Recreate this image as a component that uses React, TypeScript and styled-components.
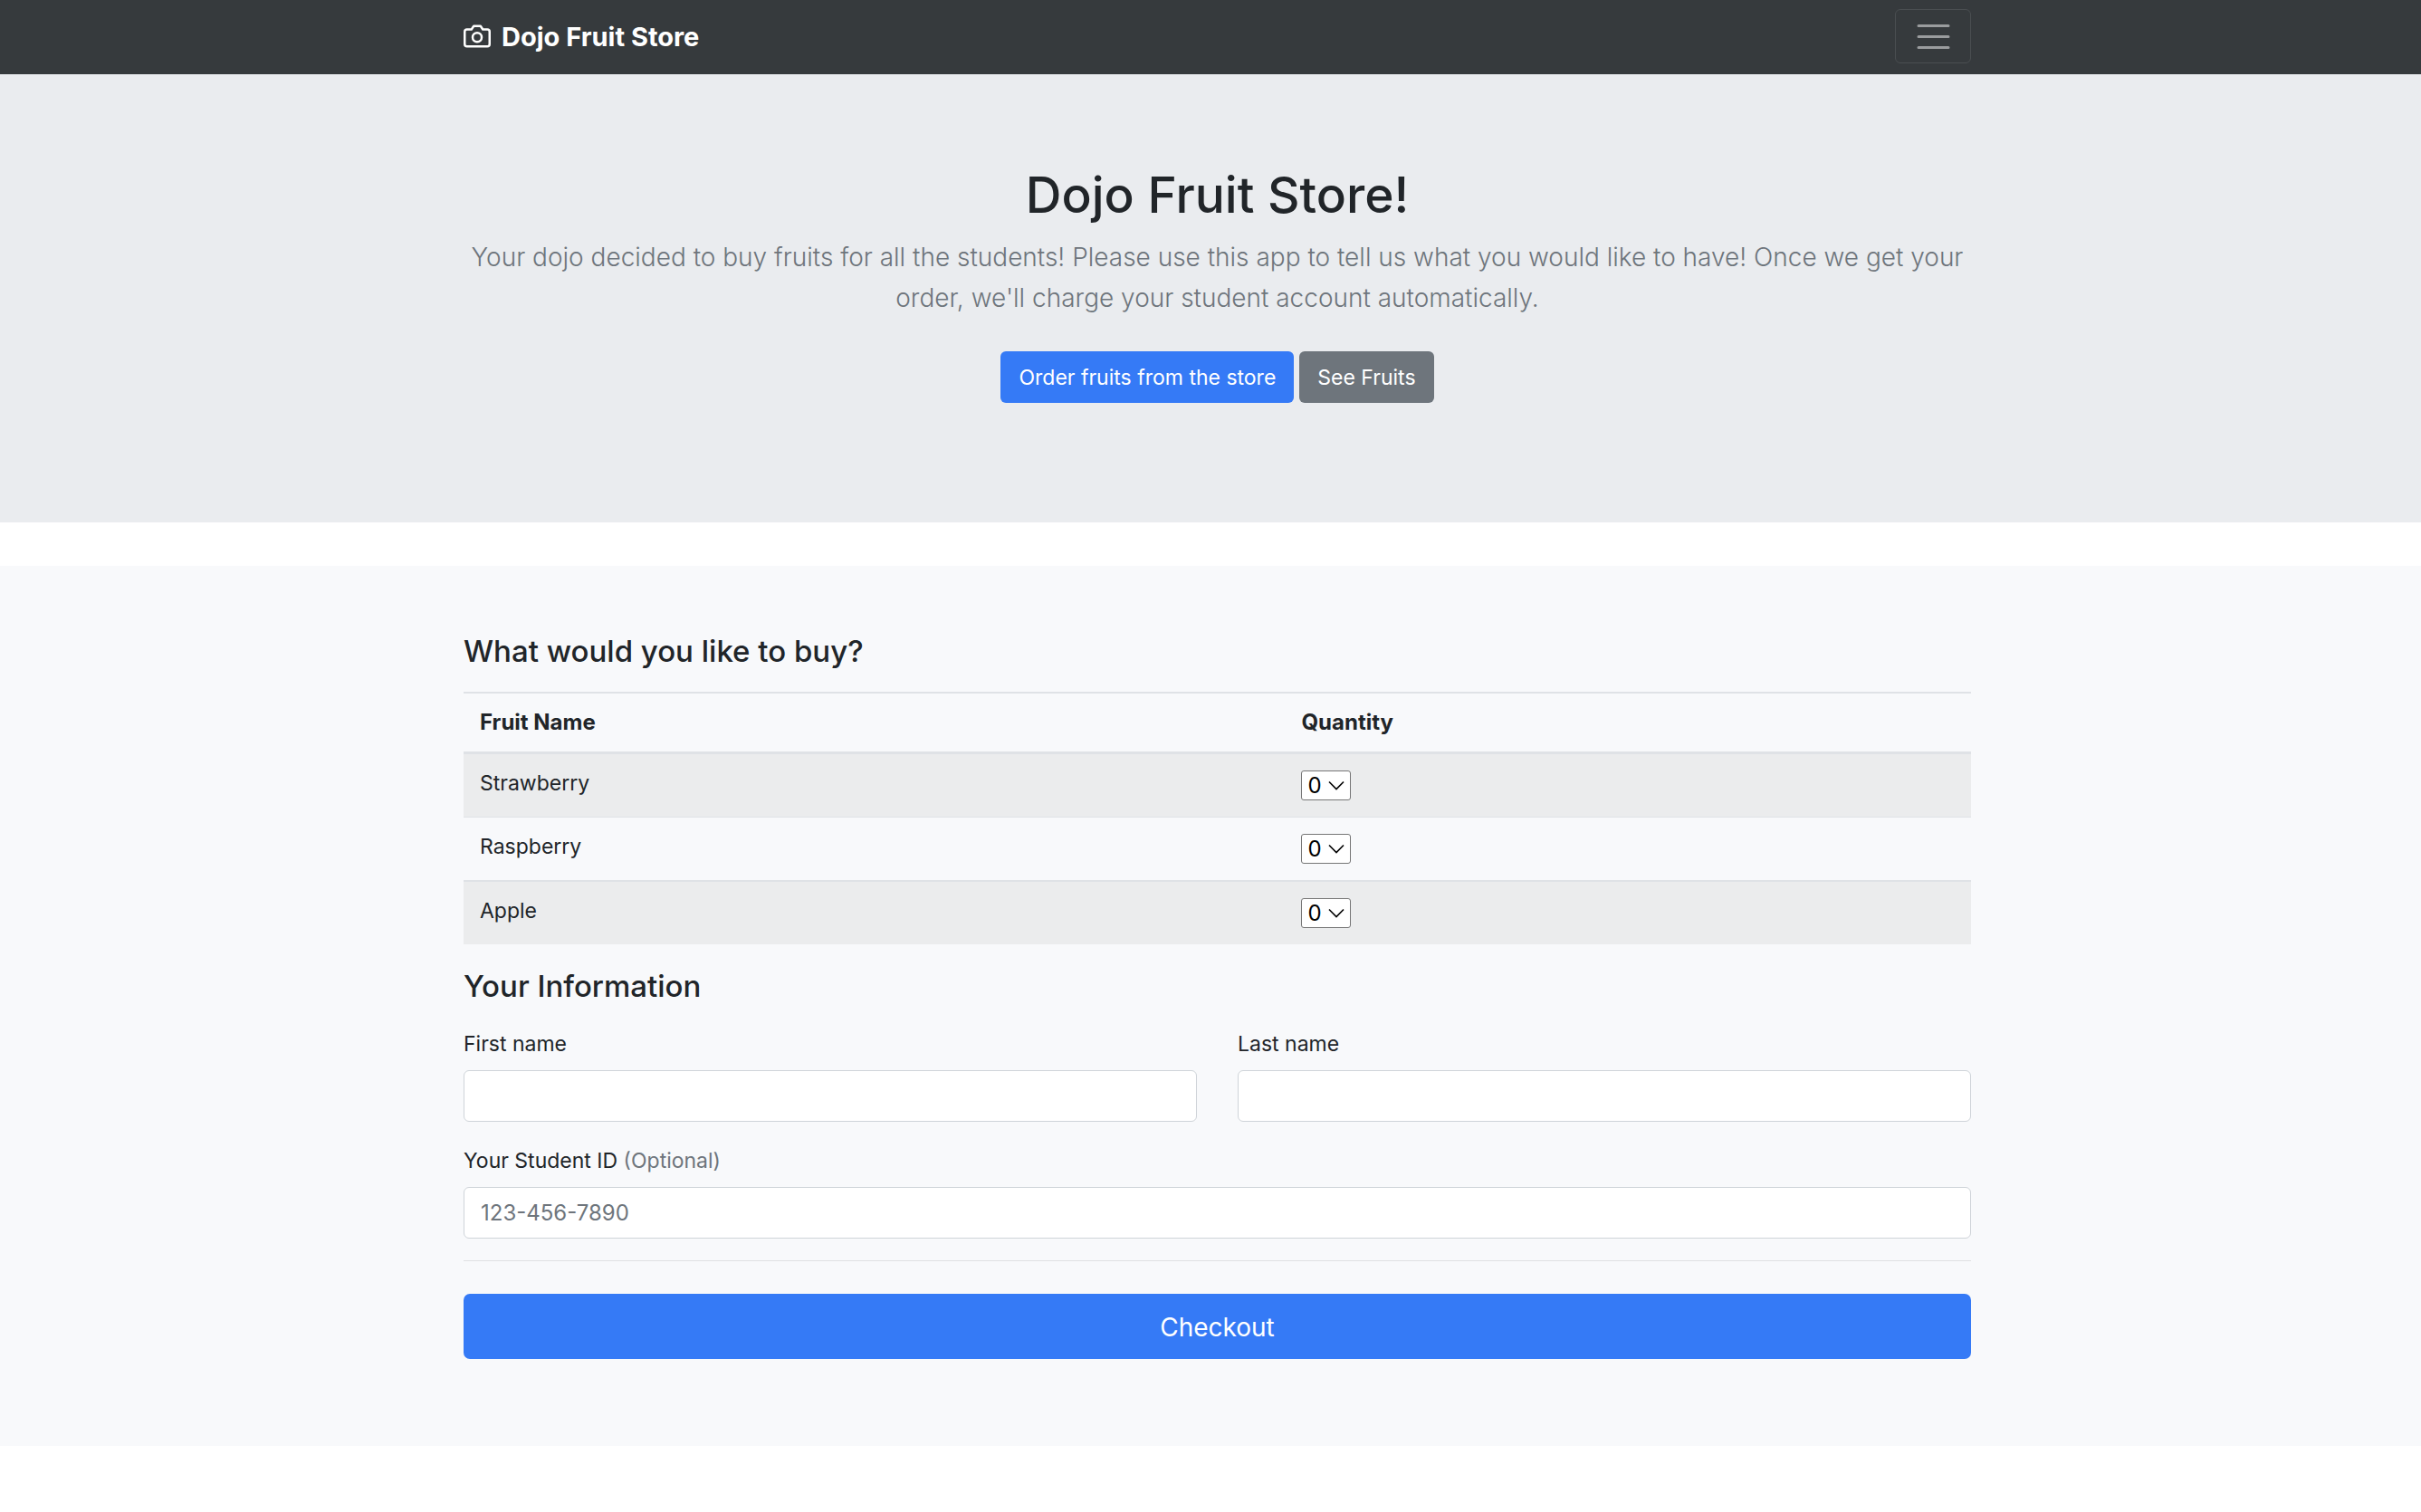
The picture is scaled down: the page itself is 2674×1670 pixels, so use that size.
import React, { useState } from "react";
import styled, { createGlobalStyle } from "styled-components";

const GlobalStyle = createGlobalStyle`
  *, *::before, *::after { box-sizing: border-box; }
  body {
    margin: 0;
    background: #fff;
    color: #212529;
    font-family: Inter, "Liberation Sans", sans-serif;
    font-size: 23px;
    line-height: 36px;
  }
  h1, h2, p { margin: 0; }
  button, input, select { font: inherit; }
`;

const Container = styled.div`
  width: 100%;
  max-width: 1665px;
  margin: 0 auto;
`;

const Band = styled.div`
  padding-left: 15px;
`;

const Navbar = styled(Band).attrs({ as: "header" })`
  background: #363a3d;
  padding-top: 10px;
  padding-bottom: 12px;
`;

const NavRow = styled(Container)`
  display: flex;
  align-items: center;
  justify-content: space-between;
`;

const Brand = styled.a`
  display: flex;
  align-items: center;
  gap: 12px;
  color: #fff;
  font-size: 29px;
  font-weight: 700;
  line-height: 45px;
  text-decoration: none;
`;

const Toggler = styled.button`
  display: flex;
  align-items: center;
  justify-content: center;
  width: 84px;
  height: 60px;
  padding: 0;
  background: transparent;
  border: 1px solid #4a4e51;
  border-radius: 6px;
  color: #9a9c9e;
  cursor: pointer;
`;

const Hero = styled(Band).attrs({ as: "section" })`
  background: #eaecef;
  padding-top: 96px;
  padding-bottom: 96px;
  margin-bottom: 48px;
  text-align: center;
`;

const Title = styled.h1`
  font-size: 55px;
  font-weight: 500;
  line-height: 74px;
  margin-bottom: 10px;
`;

const Lead = styled.p`
  color: #6e757c;
  font-size: 28px;
  font-weight: 300;
  line-height: 45px;
  margin-bottom: 24px;
`;

const Actions = styled.div`
  display: flex;
  justify-content: center;
  gap: 6px;
  padding: 12px 0 36px;
`;

const ActionLink = styled.a<{ $tone: "primary" | "secondary" }>`
  padding: 11px 20px 10px;
  background: ${({ $tone }) => ($tone === "primary" ? "#357af6" : "#6e757c")};
  border-radius: 6px;
  color: #fff;
  text-decoration: none;
`;

const OrderBand = styled(Band).attrs({ as: "main" })`
  background: #f8f9fb;
  padding-top: 72px;
  padding-bottom: 96px;
`;

const SectionTitle = styled.h2`
  font-size: 33px;
  font-weight: 500;
  line-height: 45px;
  margin-bottom: 22px;
`;

const FruitTable = styled.table`
  width: 100%;
  margin-bottom: 24px;
  border-spacing: 0;
  line-height: 28px;
`;

const HeadCell = styled.th`
  padding: 18px;
  border-top: 2px solid #dfe2e6;
  border-bottom: 3px solid #dfe2e6;
  font-size: 24px;
  font-weight: 700;
  text-align: left;

  &:first-child { width: 54.5%; }
`;

const FruitRow = styled.tr`
  &:nth-child(odd) { background: #ebeced; }
  & + & > td { border-top: 1px solid #dfe2e6; }
  & + &:last-child > td { border-top-width: 2px; }
`;

const Cell = styled.td`
  padding: 18px;
  vertical-align: top;
`;

const SelectBox = styled.div`
  display: grid;
  width: 55px;
  height: 33px;
  align-items: center;

  & > * { grid-area: 1 / 1; }
  & > svg {
    justify-self: end;
    margin-right: 7px;
    pointer-events: none;
  }
`;

const Select = styled.select`
  appearance: none;
  width: 100%;
  height: 33px;
  padding: 0 0 0 6px;
  background: #fff;
  border: 1px solid #767676;
  border-radius: 3px;
  color: #000;
  font-size: 24px;
  line-height: 31px;
`;

const FieldRow = styled.div`
  display: grid;
  grid-template-columns: 1fr 1fr;
  column-gap: 45px;
`;

const FieldBox = styled.div`
  margin-bottom: 24px;
`;

const Label = styled.label`
  display: block;
  line-height: 38px;
  margin-bottom: 10px;
`;

const Muted = styled.span`
  color: #6e757c;
`;

const Input = styled.input`
  display: block;
  width: 100%;
  height: 57px;
  padding: 0 18px;
  background: #fff;
  border: 1px solid #cfd4d9;
  border-radius: 6px;
  color: #495057;
  font-size: 24px;

  &::placeholder { color: #6e757c; opacity: 1; }
`;

const Divider = styled.hr`
  margin: 0 0 36px;
  border: 0;
  border-top: 1px solid #dfe0e2;
`;

const Checkout = styled.button`
  display: block;
  width: 100%;
  height: 72px;
  padding: 2px 0 0;
  background: #357af6;
  border: 0;
  border-radius: 7px;
  color: #fff;
  font-size: 28px;
  line-height: 45px;
  cursor: pointer;
`;

const CameraIcon = () => (
  <svg width="30" height="30" viewBox="0 0 24 24" fill="none" stroke="currentColor" strokeWidth="2" strokeLinecap="round" strokeLinejoin="round" aria-hidden="true">
    <path d="M23 19a2 2 0 0 1-2 2H3a2 2 0 0 1-2-2V8a2 2 0 0 1 2-2h4l2-3h6l2 3h4a2 2 0 0 1 2 2z" />
    <circle cx="12" cy="13" r="4" />
  </svg>
);

const MenuIcon = () => (
  <svg width="45" height="45" viewBox="0 0 30 30" fill="none" stroke="currentColor" strokeWidth="2" strokeLinecap="round" aria-hidden="true">
    <path d="M4 7h22M4 15h22M4 23h22" />
  </svg>
);

const Chevron = () => (
  <svg width="18" height="12" viewBox="0 0 18 12" fill="none" stroke="#000" strokeWidth="1.6" aria-hidden="true">
    <path d="M1 1.5l8 8 8-8" />
  </svg>
);

const fruits = ["Strawberry", "Raspberry", "Apple"];

function Quantity({ fruit }: { fruit: string }) {
  const [value, setValue] = useState("0");
  return (
    <SelectBox>
      <Select aria-label={`${fruit} quantity`} value={value} onChange={(e) => setValue(e.target.value)}>
        {["0", "1", "2", "3", "4"].map((n) => (
          <option key={n}>{n}</option>
        ))}
      </Select>
      <Chevron />
    </SelectBox>
  );
}

function Field({ id, label, hint, placeholder }: { id: string; label: string; hint?: string; placeholder?: string }) {
  return (
    <FieldBox>
      <Label htmlFor={id}>
        {label}
        {hint && <Muted> {hint}</Muted>}
      </Label>
      <Input id={id} type="text" placeholder={placeholder} />
    </FieldBox>
  );
}

export default function App() {
  return (
    <>
      <GlobalStyle />
      <Navbar>
        <NavRow>
          <Brand href="#">
            <CameraIcon />
            Dojo Fruit Store
          </Brand>
          <Toggler type="button" aria-label="Toggle navigation">
            <MenuIcon />
          </Toggler>
        </NavRow>
      </Navbar>
      <Hero>
        <Container>
          <Title>Dojo Fruit Store!</Title>
          <Lead>
            Your dojo decided to buy fruits for all the students! Please use this app to tell us what you would like to
            have! Once we get your order, we'll charge your student account automatically.
          </Lead>
          <Actions>
            <ActionLink href="#order" $tone="primary">Order fruits from the store</ActionLink>
            <ActionLink href="#fruits" $tone="secondary">See Fruits</ActionLink>
          </Actions>
        </Container>
      </Hero>
      <OrderBand id="order">
        <Container as="form" onSubmit={(e: React.FormEvent) => e.preventDefault()}>
          <SectionTitle>What would you like to buy?</SectionTitle>
          <FruitTable id="fruits">
            <thead>
              <tr>
                <HeadCell scope="col">Fruit Name</HeadCell>
                <HeadCell scope="col">Quantity</HeadCell>
              </tr>
            </thead>
            <tbody>
              {fruits.map((fruit) => (
                <FruitRow key={fruit}>
                  <Cell>{fruit}</Cell>
                  <Cell><Quantity fruit={fruit} /></Cell>
                </FruitRow>
              ))}
            </tbody>
          </FruitTable>
          <SectionTitle>Your Information</SectionTitle>
          <FieldRow>
            <Field id="first-name" label="First name" />
            <Field id="last-name" label="Last name" />
          </FieldRow>
          <Field id="student-id" label="Your Student ID" hint="(Optional)" placeholder="123-456-7890" />
          <Divider />
          <Checkout type="submit">Checkout</Checkout>
        </Container>
      </OrderBand>
    </>
  );
}
